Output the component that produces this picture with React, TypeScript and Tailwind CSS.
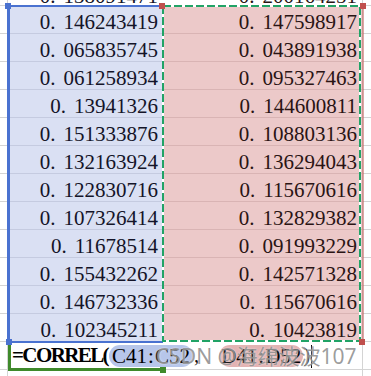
import React from 'react';

const colC = [
  '0.146243419', '0.065835745', '0.061258934', '0.13941326', '0.151333876', '0.132163924',
  '0.122830716', '0.107326414', '0.11678514', '0.155432262', '0.146732336', '0.102345211',
];
const colD = [
  '0.147598917', '0.043891938', '0.095327463', '0.144600811', '0.108803136', '0.136294043',
  '0.115670616', '0.132829382', '0.091993229', '0.142571328', '0.115670616', '0.10423819',
];

const serif = { fontFamily: '"Liberation Serif", "Noto Sans CJK SC", serif' };

// SimSun-like number: wide dot after the leading zero
const Num: React.FC<{ v: string }> = ({ v }) => {
  const [a, b] = v.split('.');
  return (
    <span>
      {a}.<span className="ml-[8px]">{b}</span>
    </span>
  );
};

const Row: React.FC<{ c: string; d: string; top?: boolean }> = ({ c, d, top }) => (
  <div className={top ? 'flex h-[6px] overflow-hidden' : 'flex h-[28px]'}>
    <div className="w-[8px] shrink-0 border-r border-b border-[#d4d4d4] bg-white" />
    <div
      className={
        'w-[155px] shrink-0 border-b text-right pr-[5px] text-[21px] leading-[32px] text-[#141428] ' +
        (top ? 'bg-white border-[#d4d4d4] -mt-[20px] h-[28px]' : 'bg-[#dae0f3] border-[#c5cbe0]')
      }
      style={serif}
    >
      <Num v={c} />
    </div>
    <div
      className={
        'w-[199px] shrink-0 border-b text-right pr-[5px] text-[21px] leading-[32px] text-[#2a1414] ' +
        (top ? 'bg-white border-[#d4d4d4] -mt-[20px] h-[28px]' : 'bg-[#ecc9c9] border-[#d9b4b4]')
      }
      style={serif}
    >
      <Num v={d} />
    </div>
    <div className="flex-1 border-l border-b border-[#d4d4d4] bg-white" />
  </div>
);

export default function App() {
  return (
    <div className="relative w-[371px] h-[376px] overflow-hidden bg-white">
      <Row c="0.138091471" d="0.200164251" top />
      {colC.map((c, i) => (
        <Row key={i} c={c} d={colD[i]} />
      ))}

      {/* formula row */}
      <div className="flex h-[28px]">
        <div className="w-[8px] shrink-0 border-r border-b border-[#d4d4d4]" />
        <div className="flex-1 border-b border-[#d4d4d4]" />
        <div className="w-[9px] shrink-0 border-l border-b border-[#d4d4d4]" />
      </div>
      <div className="flex h-[6px]">
        <div className="w-[8px] shrink-0 border-r border-[#d4d4d4]" />
        <div className="flex-1" />
        <div className="w-[9px] shrink-0 border-l border-[#d4d4d4]" />
      </div>

      {/* editing cell */}
      <div className="absolute left-[8px] top-[342px] w-[155px] h-[29px] border-l-[3px] border-b-[3px] border-[#3f8a2b]" />
      <div className="absolute left-[160px] top-[367px] w-[6px] h-[6px] bg-[#3f8a2b]" />
      <div
        className="absolute left-[12px] top-[344px] h-[24px] flex items-center text-[21px] text-black whitespace-nowrap"
        style={serif}
      >
        <span className="font-bold tracking-[-1.6px] mr-[1px]">=CORREL(</span>
        <span className="rounded-full bg-[#b7c6ea] px-[3px] h-[22px] leading-[22px]">
          C41<span className="mx-[1px]">:</span>C52
        </span>
        <span className="ml-[1px] mr-[20px]">,</span>
        <span className="rounded-full bg-[#e3b3b3] px-[2px] h-[22px] leading-[22px]">
          D41<span className="mx-[1px]">:</span>D52
        </span>
        <span>)</span>
        <span className="ml-[1px] w-[1px] h-[23px] bg-black" />
      </div>

      {/* blue selection */}
      <div className="absolute left-[7px] top-[5px] w-[156px] h-[338px] border-l-[3px] border-t-2 border-b-2 border-[#4a72d0]" />
      <div className="absolute left-[5px] top-[3px] w-[6px] h-[6px] bg-[#4a72d0]" />
      <div className="absolute left-[6px] top-[339px] w-[6px] h-[6px] bg-[#4a72d0]" />

      {/* copy marquee */}
      <svg className="absolute left-0 top-0" width="371" height="376">
        <line x1="363" y1="6" x2="363" y2="342" stroke="#c0504d" strokeWidth="1" />
        <rect x="163" y="6" width="197" height="335" fill="none" stroke="#ffffff" strokeWidth="2" />
        <rect x="163" y="6" width="197" height="335" fill="none" stroke="#21a366" strokeWidth="2" strokeDasharray="8 3" />
        <rect x="159" y="3" width="6" height="6" fill="#c0504d" />
        <rect x="360" y="3" width="6" height="6" fill="#c0504d" />
        <rect x="359" y="339" width="6" height="6" fill="#c0504d" />
      </svg>

      {/* watermark */}
      <div
        className="absolute left-[156px] top-[342px] text-[21px] leading-[28px] text-[#8c8c8c]/85 whitespace-nowrap [text-shadow:0_0_2px_rgba(255,255,255,0.7)]"
        style={{ fontFamily: '"Noto Sans", "Noto Sans CJK SC", sans-serif' }}
      >
        CSDN @海绵波波107
      </div>
    </div>
  );
}
